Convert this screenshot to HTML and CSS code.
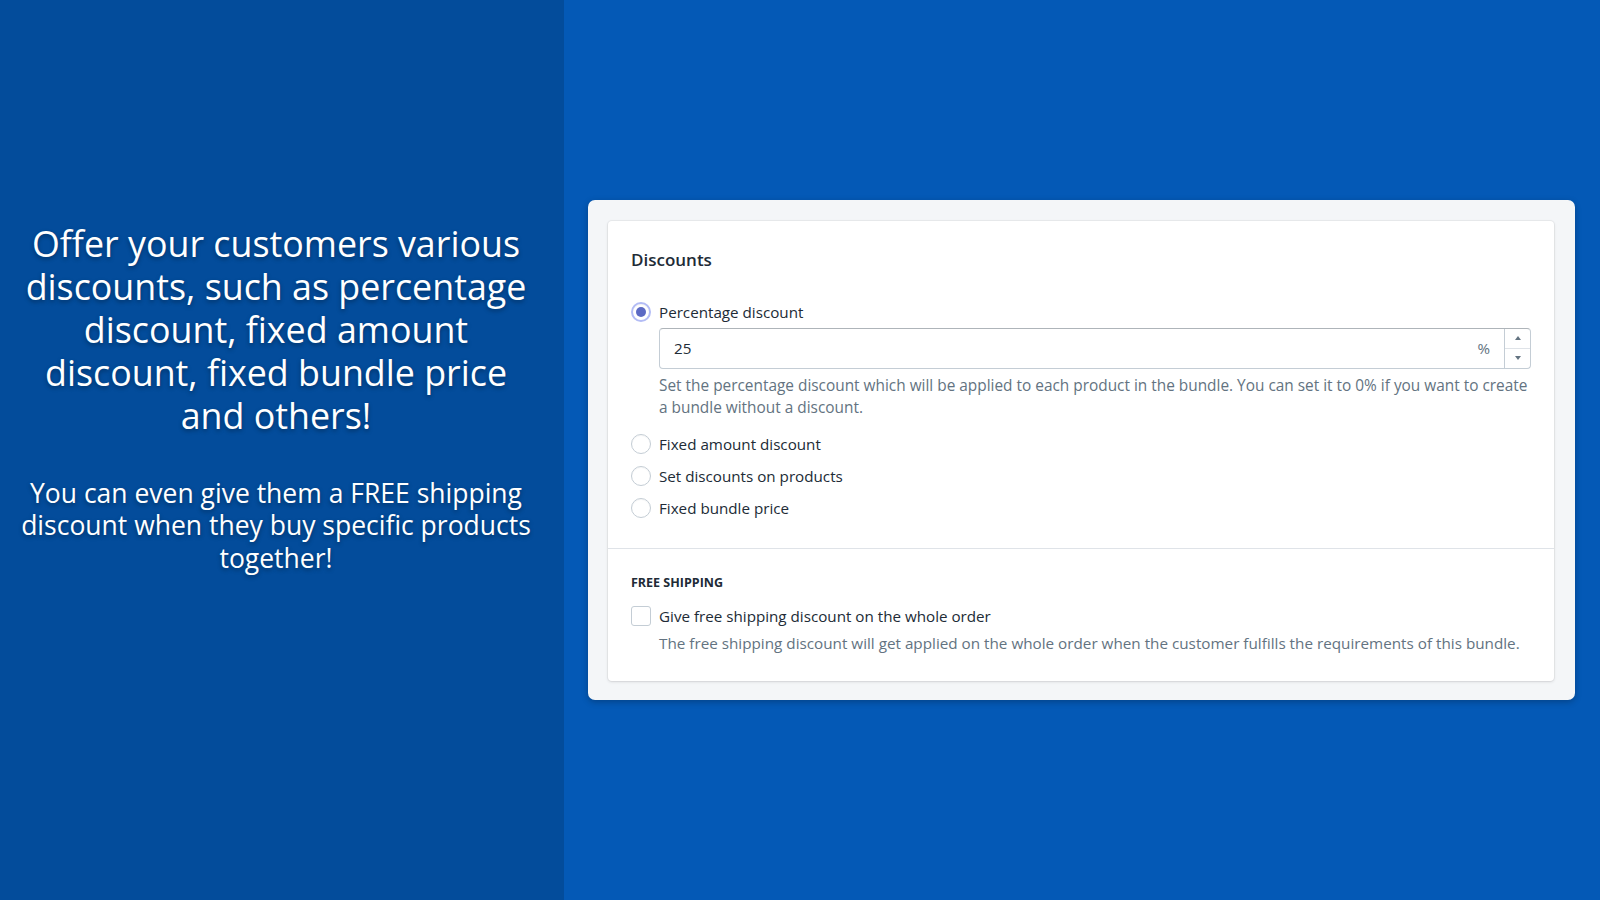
FILE: index.html
```html
<!DOCTYPE html>
<html lang="en">
<head>
<meta charset="utf-8">
<title>Discounts</title>
<link rel="stylesheet" href="styles.css">
</head>
<body>
<div class="page">
  <section class="promo">
    <p class="promo-main">Offer your customers various discounts, such as percentage discount, fixed amount discount, fixed bundle price and others!</p>
    <p class="promo-sub">You can even give them a FREE shipping discount when they buy specific products together!</p>
  </section>
  <section class="stage">
    <div class="frame">
      <div class="card">
        <div class="card-section">
          <h2 class="card-title">Discounts</h2>
          <div class="choice-list">
            <div class="choice">
              <span class="radio radio-on"></span>
              <span class="choice-label">Percentage discount</span>
            </div>
            <div class="choice-children">
              <div class="field">
                <span class="field-value">25</span>
                <span class="field-suffix">%</span>
                <span class="spinner">
                  <span class="spin-btn"><svg width="8" height="6" viewBox="0 0 8 6"><path d="M1 5h6L4 1z" fill="#637381"/></svg></span>
                  <span class="spin-btn"><svg width="8" height="6" viewBox="0 0 8 6"><path d="M1 1h6L4 5z" fill="#637381"/></svg></span>
                </span>
              </div>
              <p class="help">Set the percentage discount which will be applied to each product in the bundle. You can set it to 0% if you want to create a bundle without a discount.</p>
            </div>
            <div class="choice">
              <span class="radio"></span>
              <span class="choice-label">Fixed amount discount</span>
            </div>
            <div class="choice">
              <span class="radio"></span>
              <span class="choice-label">Set discounts on products</span>
            </div>
            <div class="choice">
              <span class="radio"></span>
              <span class="choice-label">Fixed bundle price</span>
            </div>
          </div>
        </div>
        <div class="card-section section-ship">
          <h3 class="subheading">FREE SHIPPING</h3>
          <div class="choice">
            <span class="checkbox"></span>
            <span class="choice-label">Give free shipping discount on the whole order</span>
          </div>
          <p class="help help-ship">The free shipping discount will get applied on the whole order when the customer fulfills the requirements of this bundle.</p>
        </div>
      </div>
    </div>
  </section>
</div>
</body>
</html>
```

FILE: styles.css
```css
* { box-sizing: border-box; }
html, body { margin: 0; padding: 0; }
body {
  width: 1600px;
  height: 900px;
  overflow: hidden;
  font-family: "Open Sans", "Noto Sans", sans-serif;
}
.page {
  display: flex;
  height: 900px;
}
.promo {
  width: 564px;
  flex: none;
  background: #034c9b;
  color: #fff;
  text-align: center;
  display: flex;
  flex-direction: column;
  justify-content: center;
  padding: 0 28px 104px 16px;
  text-shadow: 0 2px 4px rgba(0,0,0,0.35);
}
.promo-main {
  margin: 0 0 40px;
  font-size: 35.8px;
  line-height: 43px;
}
.promo-sub {
  margin: 0;
  font-size: 26.5px;
  line-height: 32.5px;
}
.stage {
  flex: 1;
  background: #0459b6;
  display: flex;
  align-items: center;
  padding: 0 25px 0 24px;
}
.frame {
  flex: 1;
  background: #f4f6f8;
  border-radius: 7px;
  padding: 21px 21px 19px 20px;
  box-shadow: 0 2px 6px rgba(0,0,0,0.25);
}
.card {
  background: #fff;
  border-radius: 4px;
  box-shadow: 0 0 0 1px rgba(63,63,68,0.05), 0 1px 3px rgba(63,63,68,0.15);
  color: #212b36;
  font-size: 15.2px;
}
.card-section {
  padding: 27px 23px 24px;
}
.section-ship {
  border-top: 1px solid #dfe3e8;
  padding-top: 25px;
  padding-bottom: 27px;
}
.card-title {
  margin: 0 0 24px;
  font-size: 17px;
  font-weight: 600;
  line-height: 24px;
}
.choice {
  display: flex;
  align-items: center;
  gap: 8px;
  height: 32px;
}
.choice-label {
  line-height: 24px;
}
.radio {
  width: 20px;
  height: 20px;
  border-radius: 50%;
  border: 1px solid #c4cdd5;
  background: #fff;
  box-shadow: inset 0 1px 1px rgba(0,0,0,0.04);
  flex: none;
  display: flex;
  align-items: center;
  justify-content: center;
}
.radio-on {
  border: 2px solid #b3bcf5;
}
.radio-on::after {
  content: "";
  width: 10px;
  height: 10px;
  border-radius: 50%;
  background: #5c6ac4;
}
.checkbox {
  width: 20px;
  height: 20px;
  border: 1px solid #c4cdd5;
  border-radius: 3px;
  background: #fff;
  flex: none;
}
.choice-children {
  padding-left: 28px;
  padding-bottom: 8px;
}
.field {
  display: flex;
  align-items: center;
  height: 41px;
  border: 1px solid #c4cdd5;
  border-top-color: #aeb4b9;
  border-radius: 4px;
  background: #fff;
}
.field-value {
  flex: 1;
  padding-left: 14px;
}
.field-suffix {
  color: #637381;
  padding-right: 14px;
}
.spinner {
  width: 26px;
  align-self: stretch;
  border-left: 1px solid #c4cdd5;
  display: flex;
  flex-direction: column;
}
.spin-btn {
  flex: 1;
  display: flex;
  align-items: center;
  justify-content: center;
}
.spin-btn + .spin-btn {
  border-top: 1px solid #dfe3e8;
}
.help {
  margin: 6px 0 0;
  color: #637381;
  font-size: 15.4px;
  line-height: 22.5px;
}
.subheading {
  margin: 0 0 8px;
  font-size: 12.5px;
  font-weight: 700;
  line-height: 18px;
  text-transform: uppercase;
}
.help-ship {
  margin: 0;
  padding-left: 28px;
  font-size: 15.25px;
}
```
